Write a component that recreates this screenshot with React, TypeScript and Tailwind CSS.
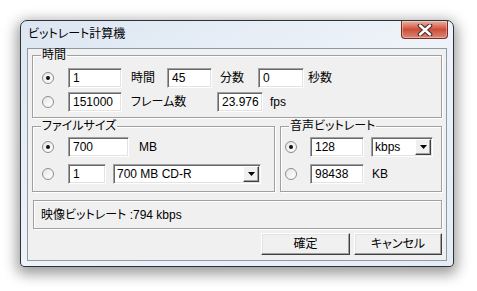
import React from 'react';

const jp = "font-['Liberation_Sans','Noto_Sans_CJK_JP',sans-serif] [font-feature-settings:'palt']";

const sunken =
  'border border-t-[#a0a0a0] border-l-[#a0a0a0] border-b-white border-r-white shadow-[inset_1px_1px_0_#696969,inset_-1px_-1px_0_#e3e3e3] bg-white';

const Radio = ({ checked }: { checked?: boolean }) => (
  <span className="w-[12px] h-[12px] shrink-0 rounded-full border border-[#8d8d8d] bg-gradient-to-br from-[#e6e6e6] to-white flex items-center justify-center">
    {checked && <span className="w-[4px] h-[4px] rounded-full bg-[#111]" />}
  </span>
);

const Field = ({ value, w }: { value: string; w: string }) => (
  <div className={`${sunken} ${w} h-[20px] pl-[4px] flex items-center text-[12px] leading-none text-black`}>{value}</div>
);

const Select = ({ value, w }: { value: string; w: string }) => (
  <div className={`${sunken} ${w} h-[20px] flex items-center text-[12px] leading-none text-black`}>
    <span className="flex-1 pl-[3px]">{value}</span>
    <span className="w-[16px] h-[16px] mr-[1px] bg-[#f0f0f0] border border-t-white border-l-white border-b-[#404040] border-r-[#404040] shadow-[inset_-1px_-1px_0_#a0a0a0] flex items-center justify-center">
      <svg width="7" height="4" viewBox="0 0 7 4"><path d="M0 0h7L3.5 4z" fill="#000" /></svg>
    </span>
  </div>
);

const Group = ({ title, className, children }: { title?: string; className: string; children: React.ReactNode }) => (
  <div className={`relative border border-[#a0a0a0] shadow-[inset_1px_1px_0_#fff,1px_1px_0_#fff] ${className}`}>
    {title && (
      <span className="absolute -top-[7px] left-[8px] px-[1px] bg-[#f0f0f0] text-[12px] leading-[13px] text-black">{title}</span>
    )}
    {children}
  </div>
);

const Label = ({ text, className }: { text: string; className: string }) => (
  <span className={`text-[12px] leading-none text-black whitespace-nowrap ${className}`}>{text}</span>
);

const Button = ({ text, w }: { text: string; w: string }) => (
  <button className={`${w} h-[22px] bg-[#f0f0f0] border border-t-white border-l-white border-b-[#404040] border-r-[#404040] shadow-[inset_-1px_-1px_0_#a0a0a0,inset_1px_1px_0_#e3e3e3] text-[12px] leading-none text-black`}>
    {text}
  </button>
);

export default function App() {
  return (
    <div className={`w-[477px] h-[291px] bg-white pt-[20px] pl-[20px] ${jp}`}>
      <div className="w-[434px] h-[247px] flex flex-col rounded-t-[7px] rounded-b-[4px] border border-[#2f3235] bg-gradient-to-br from-[#dce6f2] via-[#eef3f9] to-[#e4ecf5] shadow-[0_4px_14px_3px_rgba(0,0,0,0.4)]">
        {/* Title bar */}
        <div className="h-[27px] flex items-start justify-between">
          <span className="pl-[7px] pt-[6px] text-[12px] leading-[14px] text-black">ビットレート計算機</span>
          <div className="mr-[5px] w-[47px] h-[18px] rounded-b-[4px] border border-t-0 border-[#7a2c21] bg-gradient-to-b from-[#e9b0a4] via-[#cd4d38] to-[#d88676] shadow-[inset_0_0_0_1px_rgba(255,255,255,0.35)] flex items-center justify-center">
            <svg width="16" height="12" viewBox="0 0 16 12">
              <path d="M3 1.5l10 9M13 1.5l-10 9" stroke="#4a2a28" strokeWidth="4.6" strokeLinecap="round" />
              <path d="M3 1.5l10 9M13 1.5l-10 9" stroke="#fff" strokeWidth="2.4" strokeLinecap="round" />
            </svg>
          </div>
        </div>

        {/* Client area */}
        <div className="mx-[6px] h-[213px] border border-[#8e9aa6] bg-[#f0f0f0] flex flex-col px-[4px] pt-[6px]">
          <Group title="時間" className="h-[63px] pl-[9px] pt-[12px] flex flex-col gap-[4px]">
            <div className="flex items-center h-[20px]">
              <Radio checked />
              <Field value="1" w="w-[54px] ml-[14px]" />
              <Label text="時間" className="ml-[9px]" />
              <Field value="45" w="w-[45px] ml-[12px]" />
              <Label text="分数" className="ml-[8px]" />
              <Field value="0" w="w-[46px] ml-[14px]" />
              <Label text="秒数" className="ml-[4px]" />
            </div>
            <div className="flex items-center h-[20px]">
              <Radio />
              <Field value="151000" w="w-[54px] ml-[14px]" />
              <Label text="フレーム数" className="ml-[9px] w-[86px]" />
              <Field value="23.976" w="w-[46px]" />
              <Label text="fps" className="ml-[7px]" />
            </div>
          </Group>

          <div className="mt-[8px] h-[66px] flex gap-[5px]">
            <Group title="ファイルサイズ" className="w-[243px] pl-[9px] pt-[10px] flex flex-col gap-[7px]">
              <div className="flex items-center h-[20px]">
                <Radio checked />
                <Field value="700" w="w-[61px] ml-[14px]" />
                <Label text="MB" className="ml-[10px]" />
              </div>
              <div className="flex items-center h-[20px]">
                <Radio />
                <Field value="1" w="w-[38px] ml-[14px]" />
                <Select value="700 MB CD-R" w="w-[148px] ml-[7px]" />
              </div>
            </Group>
            <Group title="音声ビットレート" className="w-[162px] pl-[4px] pt-[10px] flex flex-col gap-[7px]">
              <div className="flex items-center h-[20px]">
                <Radio checked />
                <Field value="128" w="w-[54px] ml-[13px]" />
                <Select value="kbps" w="w-[62px] ml-[7px]" />
              </div>
              <div className="flex items-center h-[20px]">
                <Radio />
                <Field value="98438" w="w-[54px] ml-[13px]" />
                <Label text="KB" className="ml-[8px]" />
              </div>
            </Group>
          </div>

          <Group className="mt-[8px] ml-[1px] h-[29px] pl-[7px] flex items-center">
            <Label text="映像ビットレート :794 kbps" className="" />
          </Group>

          <div className="mt-[4px] flex justify-end gap-[4px]">
            <Button text="確定" w="w-[89px]" />
            <Button text="キャンセル" w="w-[88px]" />
          </div>
        </div>
      </div>
    </div>
  );
}
